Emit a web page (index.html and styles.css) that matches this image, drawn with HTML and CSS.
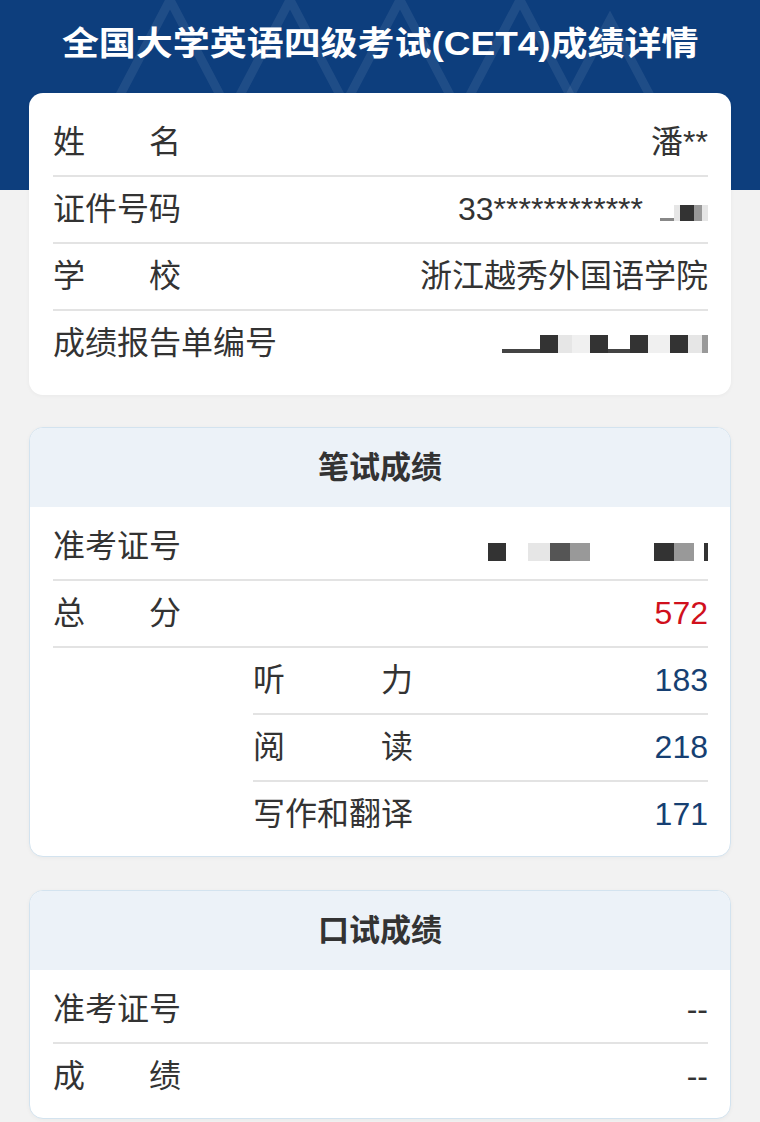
FILE: index.html
```html
<!DOCTYPE html>
<html lang="zh-CN">
<head>
<meta charset="utf-8">
<title>全国大学英语四级考试(CET4)成绩详情</title>
<link rel="stylesheet" href="styles.css">
</head>
<body>
<header class="hero">
  <svg class="pattern" width="760" height="190" viewBox="0 0 760 190" aria-hidden="true">
    <g fill="none" stroke="#ffffff" stroke-opacity="0.08" stroke-width="9">
      <polyline points="70,190 170,0 270,190"/>
      <polyline points="190,190 290,0 390,190"/>
      <polyline points="300,190 400,0 500,190"/>
      <polyline points="420,190 520,0 620,190"/>
      <polyline points="520,190 610,20 700,190"/>
    </g>
  </svg>
  <h1 class="title"><span class="title-text">全国大学英语四级考试(CET4)成绩详情</span></h1>
</header>

<main class="content">
  <section class="card card-plain">
    <div class="row">
      <span class="lbl lbl4">姓名</span>
      <span class="val">潘**</span>
    </div>
    <div class="row">
      <span class="lbl lbl4">证件号码</span>
      <span class="val">33************<span class="mosaic mosaic-id"><i class="m w14 tall0"></i><i class="m w6 m-l"></i><i class="m w14 m-d"></i><i class="m w8 m-g"></i><i class="m w6 m-l"></i></span></span>
    </div>
    <div class="row">
      <span class="lbl lbl4">学校</span>
      <span class="val">浙江越秀外国语学院</span>
    </div>
    <div class="row">
      <span class="lbl">成绩报告单编号</span>
      <span class="val"><span class="mosaic mosaic-no"><i class="m w38 m-f"></i><i class="m w18 m-d"></i><i class="m w14 m-l"></i><i class="m w18 m-x"></i><i class="m w18 m-d"></i><i class="m w22 m-f"></i><i class="m w18 m-d"></i><i class="m w22 m-x"></i><i class="m w18 m-d"></i><i class="m w14 m-l"></i><i class="m w6 m-g"></i></span></span>
    </div>
  </section>

  <section class="card card-box">
    <h2 class="card-head">笔试成绩</h2>
    <div class="card-body">
      <div class="row">
        <span class="lbl lbl4">准考证号</span>
        <span class="val"><span class="mosaic mosaic-ticket"><i class="m w18 m-d"></i><i class="m w22 m-w"></i><i class="m w22 m-l"></i><i class="m w20 m-d2"></i><i class="m w20 m-g"></i><i class="m w64 m-w"></i><i class="m w20 m-d"></i><i class="m w20 m-g"></i><i class="m w10 m-w"></i><i class="m w4 m-d"></i></span></span>
      </div>
      <div class="row">
        <span class="lbl lbl4">总分</span>
        <span class="val total">572</span>
      </div>
      <div class="sub">
        <div class="row">
          <span class="lbl lbl5">听力</span>
          <span class="val score">183</span>
        </div>
        <div class="row">
          <span class="lbl lbl5">阅读</span>
          <span class="val score">218</span>
        </div>
        <div class="row">
          <span class="lbl lbl5">写作和翻译</span>
          <span class="val score">171</span>
        </div>
      </div>
    </div>
  </section>

  <section class="card card-box">
    <h2 class="card-head">口试成绩</h2>
    <div class="card-body">
      <div class="row">
        <span class="lbl lbl4">准考证号</span>
        <span class="val">--</span>
      </div>
      <div class="row">
        <span class="lbl lbl4">成绩</span>
        <span class="val">--</span>
      </div>
    </div>
  </section>
</main>
</body>
</html>
```

FILE: styles.css
```css
* { box-sizing: border-box; }

html, body {
  margin: 0;
  padding: 0;
}

body {
  background: #f2f2f2;
  font-family: "Liberation Sans", "Noto Sans CJK SC", sans-serif;
  color: #333333;
  width: 760px;
}

.hero {
  position: relative;
  height: 190px;
  background: #0d3e7d;
  overflow: hidden;
}

.pattern {
  position: absolute;
  left: 0;
  top: 0;
}

.title {
  position: relative;
  margin: 0;
  height: 88px;
  line-height: 88px;
  text-align: center;
  color: #ffffff;
  font-size: 33px;
  font-weight: 700;
  white-space: nowrap;
}

.title-text {
  display: inline-block;
  transform: scaleX(1.12);
}

.content {
  position: relative;
  margin-top: -97px;
  padding: 0 29px 20px;
  display: flex;
  flex-direction: column;
  gap: 32px;
}

.card {
  background: #ffffff;
  border-radius: 14px;
  overflow: hidden;
}

.card-plain {
  padding: 17px 23px 19px 24px;
  box-shadow: 0 1px 4px rgba(0, 0, 0, 0.04);
}

.card-box {
  border: 1px solid #d3e3ef;
  box-shadow: 0 1px 4px rgba(0, 0, 0, 0.04);
}

.card-box + .card-box {
  margin-top: 1px;
}

.card-head {
  margin: 0;
  height: 79px;
  line-height: 79px;
  background: #ecf2f8;
  text-align: center;
  font-size: 31px;
  font-weight: 700;
  color: #333333;
}

.card-body {
  padding: 7px 22px 9px 23px;
}

.row {
  box-sizing: content-box;
  height: 65px;
  display: flex;
  align-items: center;
  justify-content: space-between;
  font-size: 32px;
  line-height: 1;
}

.row + .row {
  border-top: 2px solid #e3e3e3;
}

.sub {
  box-sizing: content-box;
  padding-left: 200px;
  border-top: 2px solid #e3e3e3;
}

.lbl {
  font-size: 32px;
  white-space: nowrap;
  color: #333333;
  padding-bottom: 2px;
}

.lbl4 {
  width: 4em;
  text-align: justify;
  text-align-last: justify;
}

.lbl5 {
  width: 5em;
  text-align: justify;
  text-align-last: justify;
}

.val {
  white-space: nowrap;
  color: #333333;
  display: flex;
  align-items: center;
  padding-bottom: 2px;
}

.total {
  color: #d0101c;
}

.score {
  color: #163f72;
}

.mosaic {
  display: inline-flex;
  align-items: flex-end;
  height: 22px;
}

.mosaic-id {
  margin-left: 17px;
  height: 16px;
  margin-top: 8px;
}

.mosaic-no {
  height: 18px;
  margin-top: 2px;
}

.mosaic-ticket {
  height: 18px;
  margin-top: 12px;
}

.m {
  display: block;
  height: 100%;
}

.w4 { width: 4px; }
.w6 { width: 6px; }
.w8 { width: 8px; }
.w10 { width: 10px; }
.w14 { width: 14px; }
.w18 { width: 18px; }
.w20 { width: 20px; }
.w22 { width: 22px; }
.w38 { width: 38px; }
.w64 { width: 64px; }

.tall0 { height: 3px; background: #888888; }
.m-d { background: #333333; }
.m-d2 { background: #555555; }
.m-g { background: #999999; }
.m-l { background: #e6e6e6; }
.m-x { background: #f0f0f0; }
.m-w { background: transparent; }
.m-f { height: 4px; background: #444444; }
```
